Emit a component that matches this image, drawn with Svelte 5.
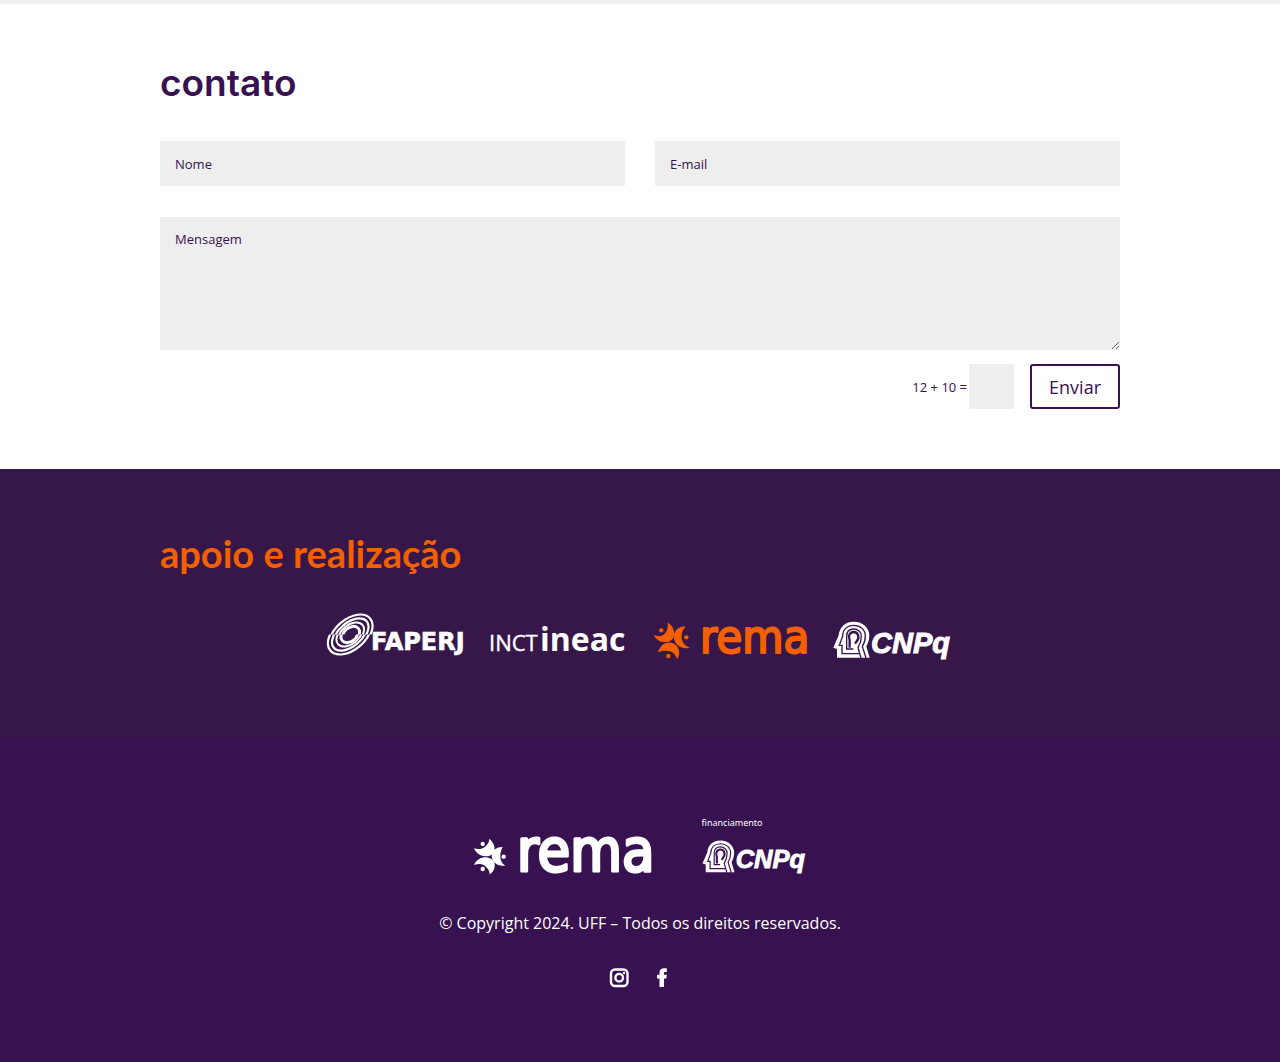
<script>
  let name = $state('');
  let email = $state('');
  let message = $state('');
  let answer = $state('');

  function onSubmit(e) {
    e.preventDefault();
  }
</script>

{#snippet cnpq()}
  <g transform="scale(0.3333)">
    <path fill="currentColor" d="M12 137V111L1 107L17 70C20 43 38 29 62 29C90 29 109 48 109 71C109 86 104 95 100 103L110 137Z" />
    <g class="lines">
      <path d="M99 138L88 103C94 94 97 83 97 72C97 53 82 40 62 40C43 40 30 52 29 72L19 100H27V125H78" />
      <path d="M84 138L75 106C82 95 85 84 85 73C85 60 75 51 62 51C48 51 41 60 41 73V111H61" />
    </g>
    <path class="lines face" d="M50 107V84C44 74 50 60 62 60C76 60 81 78 71 88L66 95" />
  </g>
  <text class="cnpq-name" x="38" y="41">CNPq</text>
{/snippet}

{#snippet rings()}
  <g transform="translate(23 22.5) rotate(-40)" fill="none" stroke="currentColor">
    <ellipse rx="25" ry="15.5" stroke-width="2.2" />
    <ellipse rx="20.5" ry="12" stroke-width="2.2" />
    <ellipse rx="15" ry="9.5" stroke-width="2" />
    <ellipse rx="9.5" ry="7" stroke-width="3" />
  </g>
{/snippet}

<main>
  <section class="contact">
    <div class="row">
      <h2>contato</h2>
      <form onsubmit={onSubmit}>
        <div class="pair">
          <input type="text" placeholder="Nome" aria-label="Nome" bind:value={name} />
          <input type="email" placeholder="E-mail" aria-label="E-mail" bind:value={email} />
        </div>
        <textarea placeholder="Mensagem" aria-label="Mensagem" bind:value={message}></textarea>
        <div class="send">
          <label for="captcha">12 + 10 =</label>
          <input id="captcha" class="captcha" type="text" bind:value={answer} />
          <button type="submit">Enviar</button>
        </div>
      </form>
    </div>
  </section>

  <section class="support">
    <div class="row">
      <h2>apoio e realização</h2>
      <div class="logos">
        <svg width="140" height="50" viewBox="0 0 140 50" role="img" aria-label="FAPERJ">
          <clipPath id="upper"><rect x="-2" y="0" width="54" height="22.5" /></clipPath>
          <clipPath id="lower"><rect x="-2" y="22.5" width="54" height="24" /></clipPath>
          <g clip-path="url(#upper)">{@render rings()}</g>
          <g transform="translate(-1.5 0)" clip-path="url(#lower)">{@render rings()}</g>
          <text class="faperj-name" x="43" y="38">FAPERJ</text>
        </svg>
        <svg width="141" height="50" viewBox="0 0 141 50" role="img" aria-label="INCT ineac">
          <text class="inct-name" x="-1" y="39">INCT</text>
          <text class="ineac-name" x="50" y="39">ineac</text>
        </svg>
        <svg class="orange" width="158" height="50" viewBox="0 0 158 50" role="img" aria-label="rema">
          <g transform="translate(-7 -7) scale(0.3333)" fill="currentColor">
            <path d="M65 52C86 66 90 92 78 104C62 118 32 112 24 90C36 95 48 94 55 87C64 79 67 66 65 52Z" />
            <path d="M119 65C94 62 80 84 84 101C88 122 110 134 132 128C117 122 108 112 107 98C106 84 110 74 119 65Z" />
            <path d="M36 142C42 118 62 110 77 113C98 119 106 142 94 163C88 148 79 138 66 138C54 136 46 137 36 142Z" />
            <circle cx="46" cy="76" r="6.500" />
            <circle cx="121" cy="97" r="6.500" />
            <circle cx="67" cy="153" r="6.500" />
          </g>
          <text class="rema-name" x="47" y="41">rema</text>
        </svg>
        <svg class="on-support" width="120" height="50" viewBox="0 0 120 50" role="img" aria-label="CNPq">
          {@render cnpq()}
        </svg>
      </div>
    </div>
  </section>

  <footer>
    <div class="brands">
      <svg width="184" height="42" viewBox="0 0 184 42" role="img" aria-label="rema">
        <g transform="translate(-8 -24) scale(0.3333)" fill="currentColor">
          <path d="M73 86C88 98 94 120 84 131C70 144 38 142 27 115C38 118 52 118 60 110C68 103 73 97 73 86Z" />
          <path d="M113 111C92 110 80 126 80 139C81 158 98 170 121 167C110 160 106 150 106 140C106 128 108 120 113 111Z" />
          <path d="M27 165C36 142 66 136 80 148C96 160 90 184 74 193C74 182 68 174 60 168C50 161 40 161 27 165Z" />
          <circle cx="53" cy="102" r="6.500" />
          <circle cx="116" cy="140" r="6.500" />
          <circle cx="53" cy="177" r="6.500" />
        </g>
        <text class="rema-name large" x="44" y="37">rema</text>
      </svg>
      <div class="funding">
        <span>financiamento</span>
        <svg class="on-footer" width="106" height="44" viewBox="0 0 120 50" role="img" aria-label="CNPq">
          {@render cnpq()}
        </svg>
      </div>
    </div>
    <p>© Copyright 2024. UFF – Todos os direitos reservados.</p>
    <nav aria-label="Redes sociais">
      <a href="#instagram" aria-label="Instagram">
        <svg width="20" height="20" viewBox="0 0 20 20" fill="none" stroke="currentColor" stroke-width="2.4">
          <rect x="2" y="1.500" width="16.500" height="16.500" rx="4" />
          <circle cx="10.200" cy="9.700" r="3.800" />
          <circle cx="15" cy="5" r="1.200" fill="currentColor" stroke="none" />
        </svg>
      </a>
      <a href="#facebook" aria-label="Facebook">
        <svg width="20" height="20" viewBox="0 0 20 20">
          <path fill="currentColor" d="M7.500 19V10.500H5V6.700H7.500V4.900C7.500 1.900 9.100 .3 12 .3H14.800V4H13.200C12.200 4 12 4.500 12 5.300V6.700H14.800L14.400 10.500H12V19Z" />
        </svg>
      </a>
    </nav>
  </footer>
</main>

<style>
  :global(body) {
    margin: 0;
    background: #371150;
  }

  main {
    font-family: 'Open Sans', 'Noto Sans', sans-serif;
    color: #371150;
  }

  .row {
    width: 75%;
    margin: 0 auto;
  }

  h2 {
    margin: 0;
    font-family: Inter, 'Open Sans', sans-serif;
    font-size: 37px;
    font-weight: 600;
    line-height: 44px;
  }

  svg {
    display: block;
    overflow: visible;
  }

  .contact {
    background: white;
    border-top: 4px solid #f1f1f1;
    padding: 57px 0 60px;
  }

  form {
    margin-top: 36px;
  }

  .pair {
    display: grid;
    grid-template-columns: 1fr 1fr;
    gap: 30px;
    margin-bottom: 31px;
  }

  input,
  textarea {
    box-sizing: border-box;
    display: block;
    width: 100%;
    height: 45px;
    padding: 0 15px;
    border: 0;
    border-radius: 0;
    background: #eee;
    color: #371150;
    font: 13px 'Open Sans', sans-serif;
  }

  textarea {
    height: 133px;
    padding: 13px 15px;
    resize: vertical;
  }

  ::placeholder {
    color: #371150;
    opacity: 1;
  }

  .send {
    display: flex;
    justify-content: flex-end;
    align-items: center;
    margin-top: 14px;
    font-size: 13px;
  }

  .send .captcha {
    width: 45px;
    margin: 0 16px 0 2px;
  }

  button {
    height: 45px;
    padding: 0 17px;
    border: 2px solid #371150;
    border-radius: 3px;
    background: transparent;
    color: #371150;
    font: 18px 'Open Sans', sans-serif;
    cursor: pointer;
  }

  .support {
    background: #37174a;
    color: white;
    padding: 62px 0 76px;
  }

  .support h2 {
    color: #f26000;
    font-family: Lato, 'Open Sans', sans-serif;
    font-size: 38px;
    font-weight: 700;
  }

  .logos {
    display: flex;
    flex-wrap: wrap;
    justify-content: center;
    gap: 22px;
    margin-top: 37px;
  }

  text {
    fill: currentColor;
  }

  .faperj-name {
    font: bold 24px 'DejaVu Sans', sans-serif;
    stroke: currentColor;
    stroke-width: 0.6;
  }

  .inct-name {
    font: 22px 'Open Sans', sans-serif;
    stroke: currentColor;
    stroke-width: 0.4;
  }

  .ineac-name {
    font: bold 32px 'Open Sans', sans-serif;
  }

  .orange {
    color: #f26000;
  }

  .rema-name {
    font: 47px 'DejaVu Sans Condensed', 'DejaVu Sans', sans-serif;
    stroke: currentColor;
    stroke-width: 2;
    stroke-linejoin: round;
  }

  .rema-name.large {
    font-size: 59px;
    stroke-width: 3;
  }

  .cnpq-name {
    font: italic bold 29px 'Liberation Sans', sans-serif;
    stroke: currentColor;
    stroke-width: 1;
  }

  .lines {
    fill: none;
    stroke-width: 4;
  }

  .face {
    stroke-width: 7;
  }

  .on-support .lines {
    stroke: #37174a;
  }

  .on-footer .lines {
    stroke: #371150;
  }

  footer {
    background: #371150;
    color: white;
    padding: 79px 0 72px;
    text-align: center;
  }

  .brands {
    display: flex;
    justify-content: center;
    align-items: flex-end;
    gap: 45px;
  }

  .funding {
    text-align: left;
  }

  .funding span {
    display: block;
    margin-bottom: 3px;
    font: 9px/12px 'Noto Sans', sans-serif;
  }

  footer p {
    margin: 35px 0 0;
    font-size: 16px;
    line-height: 24px;
  }

  nav {
    display: flex;
    justify-content: center;
    gap: 23px;
    margin-top: 33px;
  }

  a {
    color: white;
  }
</style>
